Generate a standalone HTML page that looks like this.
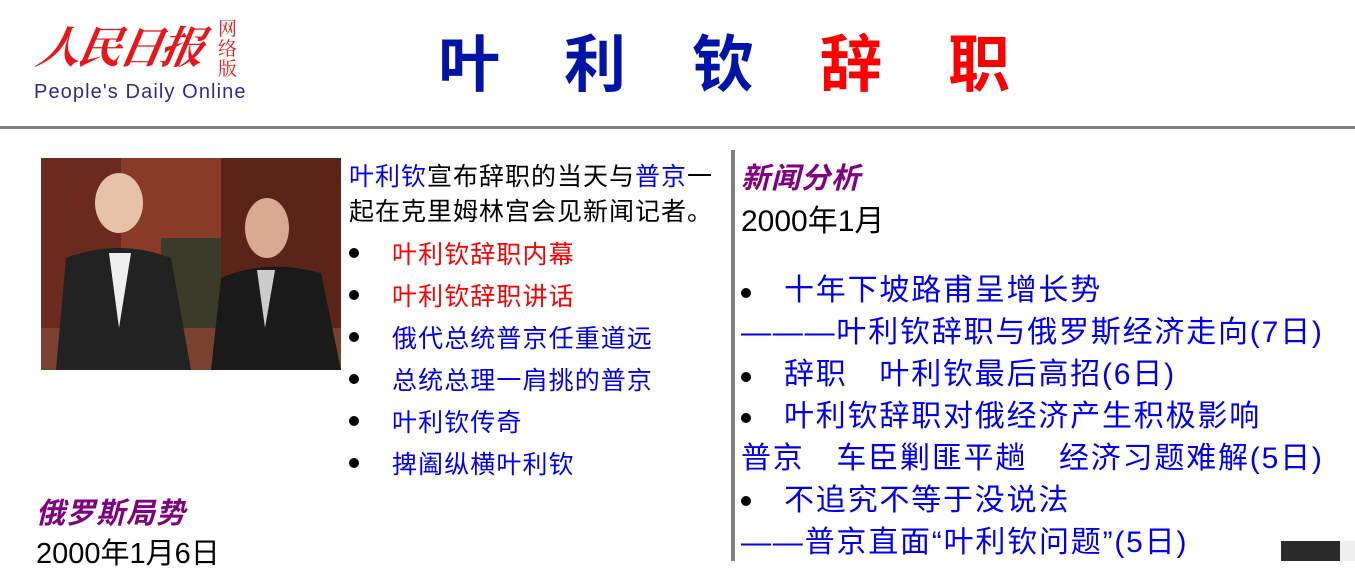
<!DOCTYPE html>
<html><head><meta charset="utf-8"><style>
body{margin:0;width:1355px;height:561px;overflow:hidden;background:#fff;position:relative;font-family:"Liberation Sans","Noto Sans CJK SC",sans-serif;}
.a{position:absolute;white-space:nowrap;}
.b{color:#0000ee}
.r{color:#ff0000}
.dot{position:absolute;width:10px;height:10px;border-radius:50%;background:#000;}
</style></head><body>
<div class="a" style="left:38px;top:12px;font-family:'Noto Serif CJK SC',serif;font-size:44px;font-weight:bold;font-style:italic;color:#e8161b;letter-spacing:-3px;transform:skewX(-10deg)">人民日报</div>
<div class="a" style="left:218px;top:18px;font-family:'Noto Serif CJK SC',serif;font-size:19px;line-height:20px;color:#e8161b;white-space:normal;width:22px">网络版</div>
<div class="a" style="left:34px;top:81px;font-size:20px;color:#2a2d91;letter-spacing:1.1px">People's Daily Online</div>
<div class="a" style="left:438px;top:22px;font-size:62px;font-weight:bold;line-height:75px;font-family:'Noto Sans CJK SC',sans-serif"><span style="color:#0014a8">叶</span><span style="color:#0014a8;margin-left:64px">利</span><span style="color:#0014a8;margin-left:66px">钦</span><span style="color:#f00;margin-left:66px">辞</span><span style="color:#f00;margin-left:66px">职</span></div>
<div class="a" style="left:0;top:126px;width:1355px;height:3px;background:#808080"></div>
<svg class="a" style="left:41px;top:158px" width="300" height="212" viewBox="0 0 300 212">
<rect width="300" height="212" fill="#6b2a1e"/>
<rect x="80" y="0" width="100" height="212" fill="#8a3a28"/>
<rect x="180" y="0" width="120" height="212" fill="#5a2418"/>
<rect x="0" y="170" width="300" height="42" fill="#7a4030"/>
<rect x="120" y="80" width="60" height="90" fill="#3b3b2a"/>
<ellipse cx="78" cy="45" rx="24" ry="30" fill="#e6c0a8"/>
<path d="M15 212 L25 100 Q78 80 130 100 L150 212Z" fill="#222"/>
<path d="M68 95 L78 170 L90 95Z" fill="#eee"/>
<ellipse cx="226" cy="70" rx="22" ry="30" fill="#d8a890"/>
<path d="M170 212 L180 120 Q226 100 280 115 L300 212Z" fill="#1a1a1a"/>
<path d="M216 112 L224 170 L234 112Z" fill="#ccc"/>
</svg>
<div class="a" style="left:349px;top:160px;font-size:25px;line-height:35px;color:#000;letter-spacing:1px"><span class="b">叶利钦</span>宣布辞职的当天与<span class="b">普京</span>一<br>起在克里姆林宫会见新闻记者。</div>
<div class="dot" style="left:349px;top:248px"></div>
<div class="dot" style="left:349px;top:290px"></div>
<div class="dot" style="left:349px;top:332px"></div>
<div class="dot" style="left:349px;top:374px"></div>
<div class="dot" style="left:349px;top:416px"></div>
<div class="dot" style="left:349px;top:458px"></div>
<div class="a" style="left:392px;top:234px;font-size:25px;line-height:42px;letter-spacing:1.1px"><span class="r">叶利钦辞职内幕</span><br><span class="r">叶利钦辞职讲话</span><br><span class="b">俄代总统普京任重道远</span><br><span class="b">总统总理一肩挑的普京</span><br><span class="b">叶利钦传奇</span><br><span class="b">捭阖纵横叶利钦</span></div>
<div class="a" style="left:36px;top:490px;font-size:29px;font-weight:bold;font-style:italic;color:#800080;letter-spacing:1px">俄罗斯局势</div>
<div class="a" style="left:36px;top:530px;font-size:29px;color:#000">2000年1月6日</div>
<div class="a" style="left:731px;top:150px;width:4px;height:411px;background:#808080"></div>
<div class="a" style="left:741px;top:155px;font-size:29px;font-weight:bold;font-style:italic;color:#800080;letter-spacing:1px">新闻分析</div>
<div class="a" style="left:741px;top:196px;font-size:30px;color:#000">2000年1月</div>
<div class="dot" style="left:741px;top:288px"></div>
<div class="dot" style="left:741px;top:372px"></div>
<div class="dot" style="left:741px;top:413px"></div>
<div class="dot" style="left:741px;top:496px"></div>
<div class="a b" style="left:741px;top:270px;font-size:30px;line-height:42px;letter-spacing:1.8px"><span style="margin-left:43px">十年下坡路甫呈增长势</span><br>———叶利钦辞职与俄罗斯经济走向(7日)<br><span style="margin-left:43px">辞职　叶利钦最后高招(6日)</span><br><span style="margin-left:43px">叶利钦辞职对俄经济产生积极影响</span><br>普京　车臣剿匪平趟　经济习题难解(5日)<br><span style="margin-left:43px">不追究不等于没说法</span><br>——普京直面“叶利钦问题”(5日)</div>
<div class="a" style="left:1281px;top:541px;width:59px;height:20px;background:#2b2b2b"></div>
<div class="a" style="left:1340px;top:541px;width:15px;height:20px;background:#eee"></div>
</body></html>
